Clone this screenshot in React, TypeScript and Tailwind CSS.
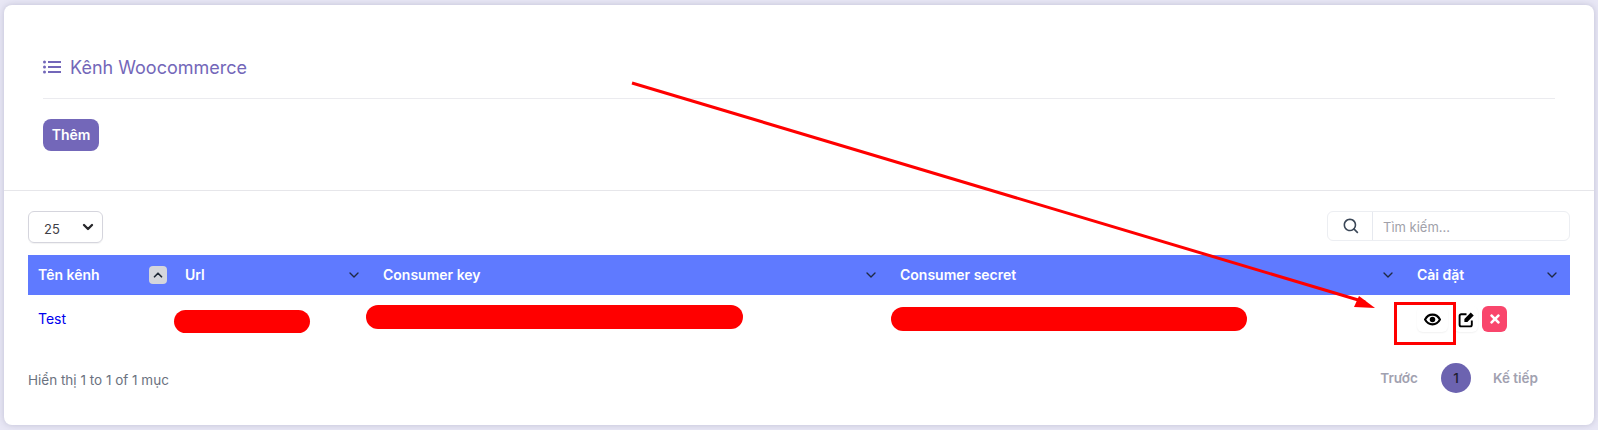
import * as React from 'react';
import { FaTimes } from 'react-icons/fa';
import { BiSearch } from 'react-icons/bi';
import { ChevronDown, ChevronUp } from 'lucide-react';

const columns = [
  { name: 'Tên kênh', width: 'w-[146px]', active: true },
  { name: 'Url', width: 'w-[198px]', active: false },
  { name: 'Consumer key', width: 'w-[517px]', active: false },
  { name: 'Consumer secret', width: 'w-[517px]', active: false },
  { name: 'Cài đặt', width: 'w-[164px]', active: false },
];

const ListIcon = () => (
  <svg viewBox="0 0 18 14" className="h-[14px] w-[18px]" fill="currentColor">
    <circle cx="1.5" cy="2" r="1.5" />
    <circle cx="1.5" cy="7" r="1.5" />
    <circle cx="1.5" cy="12" r="1.5" />
    <rect x="5" y="1" width="13" height="2" />
    <rect x="5" y="6" width="13" height="2" />
    <rect x="5" y="11" width="13" height="2" />
  </svg>
);

const EyeIcon = () => (
  <svg viewBox="0 0 16 12" className="h-[13px] w-[17px]" fill="none">
    <path d="M1 6c1.6-3 4-4.6 7-4.6S13.400 3 15 6c-1.600 3-4 4.600-7 4.600S2.600 9 1 6z" stroke="black" strokeWidth="2" />
    <circle cx="8" cy="6" r="2.600" fill="black" />
  </svg>
);

const EditIcon = () => (
  <svg viewBox="0 0 16 16" className="h-[17px] w-[17px]" fill="none">
    <path d="M8 3H3a1.500 1.500 0 0 0-1.500 1.500v8.500A1.500 1.500 0 0 0 3 14.500h8.500A1.500 1.500 0 0 0 13 13V9" stroke="black" strokeWidth="1.800" />
    <path d="M6 7.500 12 1.500l2.800 2.800-6 6H6z" fill="black" />
  </svg>
);

export default function App() {
  return (
    <div className="relative h-[430px] w-[1598px] overflow-hidden bg-[#e8e7f5] p-[5px_4px] font-['Inter','Liberation_Sans',sans-serif]">
      <div className="h-[420px] rounded-lg bg-white shadow-[0_0_6px_rgba(80,80,120,0.25)]">
        {/* Header */}
        <div className="h-[186px] border-b border-[#e6e6ea] px-[39px] pt-[51px]">
          <div className="flex h-[43px] items-start gap-[9px] border-b border-[#ebebef] text-[#7367b9]">
            <span className="mt-[4px]">
              <ListIcon />
            </span>
            <span className="text-lg leading-6">Kênh Woocommerce</span>
          </div>
          <button className="mt-[20px] h-8 w-14 rounded-lg bg-[#7367b9] text-sm font-semibold text-white">Thêm</button>
        </div>

        {/* Table */}
        <div className="px-6 pt-[20px]">
          <div className="flex items-start justify-between">
            <div className="flex h-8 w-[75px] items-center justify-between rounded-md border border-[#d5d5dd] pl-[15px] pr-1.5 text-[13px] text-[#3f3f46] shadow-[0_1px_1px_rgba(0,0,0,0.05)]">
              <span className="mt-1.5">25</span>
              <ChevronDown className="h-4 w-4 text-[#27272a]" strokeWidth={3.5} />
            </div>
            <div className="flex h-[30px] w-[243px] items-center rounded-md border border-[#eceef2] text-sm">
              <div className="flex h-full w-[45px] items-center justify-center border-r border-[#e6e9ef] pl-0.5">
                <BiSearch className="h-[19px] w-[19px] text-[#3b4757]" />
              </div>
              <span className="mt-0.5 pl-2.5 text-[13px] text-[#a1a1aa]">Tìm kiếm...</span>
            </div>
          </div>

          <table className="mt-3 w-[1542px] table-fixed border-collapse text-sm">
            <thead>
              <tr className="h-10 bg-[#5f7aff] text-left text-white">
                {columns.map((col) => (
                  <th key={col.name} className={`${col.width} pl-[11px] pr-2.5 font-semibold`}>
                    <div className="flex items-center justify-between">
                      <span className={col.active ? '-ml-px' : ''}>{col.name}</span>
                      {col.active ? (
                        <span className="-mr-[3px] flex h-[18px] w-[18px] items-center justify-center rounded bg-[#d4d6dc] text-[#1f2937]">
                          <ChevronUp className="h-3.5 w-3.5" strokeWidth={3} />
                        </span>
                      ) : (
                        <ChevronDown className="h-4 w-4 text-[#1f2a44]" strokeWidth={2} />
                      )}
                    </div>
                  </th>
                ))}
              </tr>
            </thead>
            <tbody>
              <tr className="h-[47px]">
                <td className="pl-[10px] align-top pt-[14px] text-[#0000ee]">Test</td>
                <td />
                <td />
                <td />
                <td className="align-top pt-[11px]">
                  <div className="flex items-center pl-[11px]">
                    <span className="flex h-[26px] w-[31px] items-center justify-center rounded-md shadow-[0_1px_2px_rgba(0,0,0,0.06)]">
                      <EyeIcon />
                    </span>
                    <span className="ml-1.5 flex h-[26px] w-6 items-center justify-center rounded-md shadow-[0_1px_2px_rgba(0,0,0,0.06)]">
                      <EditIcon />
                    </span>
                    <span className="ml-1 flex h-[26px] w-[25px] items-center justify-center rounded-md bg-[#f9466c] text-white">
                      <FaTimes className="h-3.5 w-3.5" />
                    </span>
                  </div>
                </td>
              </tr>
            </tbody>
          </table>

          {/* Footer */}
          <div className="mt-[21px] flex items-center justify-between">
            <span className="mt-1 text-[13.5px] text-[#6b7280]">Hiển thị 1 to 1 of 1 mục</span>
            <div className="flex items-center pr-[32px] text-[13.5px] font-semibold text-[#a1a1b0]">
              <span>Trước</span>
              <span className="ml-[23px] flex h-[30px] w-[30px] items-center justify-center rounded-full bg-[#6c63b0] font-medium text-[#1f2030]">1</span>
              <span className="ml-[22px]">Kế tiếp</span>
            </div>
          </div>
        </div>
      </div>

      {/* Redactions and annotation marks drawn over the screenshot */}
      <div className="absolute left-[174px] top-[310px] h-[23px] w-[136px] rounded-full bg-[#ff0000]" />
      <div className="absolute left-[366px] top-[305px] h-[24px] w-[377px] rounded-full bg-[#ff0000]" />
      <div className="absolute left-[891px] top-[307px] h-[24px] w-[356px] rounded-full bg-[#ff0000]" />
      <div className="absolute left-[1394px] top-[302px] h-[43px] w-[62px] border-[3px] border-[#ff0000]" />
      <svg className="absolute left-0 top-0 h-[430px] w-[1598px]" viewBox="0 0 1598 430" fill="none">
        <line x1="632" y1="83" x2="1365" y2="302" stroke="#ff0000" strokeWidth="3" />
        <polygon points="1375,308 1359,296 1354,307" fill="#ff0000" />
      </svg>
    </div>
  );
}
